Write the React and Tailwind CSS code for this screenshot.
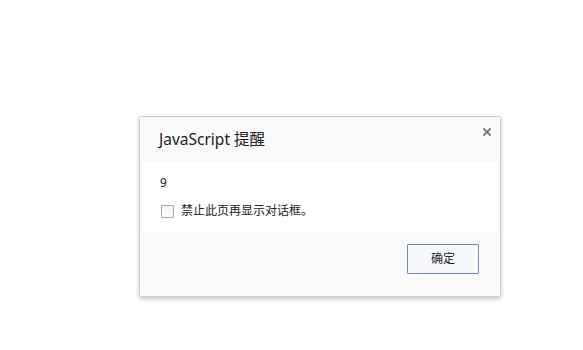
const font = { fontFamily: '"Noto Sans", "Noto Sans CJK SC", sans-serif' };

const CloseIcon = () => (
  <svg width="8" height="8" viewBox="0 0 8 8" className="block">
    <path d="M1 1L7 7M7 1L1 7" stroke="#767676" strokeWidth="1.8" strokeLinecap="square" />
  </svg>
);

const AlertDialog = () => {
  return (
    <div className="box-border flex h-[181px] w-[362px] flex-col rounded-[2px] border border-[#cfcfcf] bg-white shadow-[0_2px_4px_rgba(0,0,0,0.22)]">
      <div className="flex h-[45px] items-start justify-between bg-[#fafafa] pl-[19px] pr-[9px]">
        <h1 className="pt-[12px] text-[15.5px] leading-[20px] text-[#222]">JavaScript 提醒</h1>
        <div className="pt-[11px]">
          <CloseIcon />
        </div>
      </div>
      <div className="flex h-[70px] flex-col pl-[20px] pt-[13px]">
        <p className="text-[12px] leading-[16px] text-[#222]">9</p>
        <label className="mt-[12px] flex items-center gap-[7px] text-[12px] leading-[16px] text-[#222]">
          <span className="ml-px h-[13px] w-[13px] rounded-[1px] border border-[#a9a9a9] bg-gradient-to-b from-[#f4f4f4] to-[#fdfdfd]" />
          禁止此页再显示对话框。
        </label>
      </div>
      <div className="flex flex-1 justify-end bg-[#fafafa] pr-[21px] pt-[12px]">
        <button
          type="button"
          className="h-[30px] w-[72px] rounded-[1px] border border-[#7189b6] bg-[#f7f9fc] text-[12px] text-[#222]"
        >
          确定
        </button>
      </div>
    </div>
  );
};

export default function App() {
  return (
    <div className="h-[350px] w-[583px] bg-white pl-[139px] pt-[116px]" style={font}>
      <AlertDialog />
    </div>
  );
}
